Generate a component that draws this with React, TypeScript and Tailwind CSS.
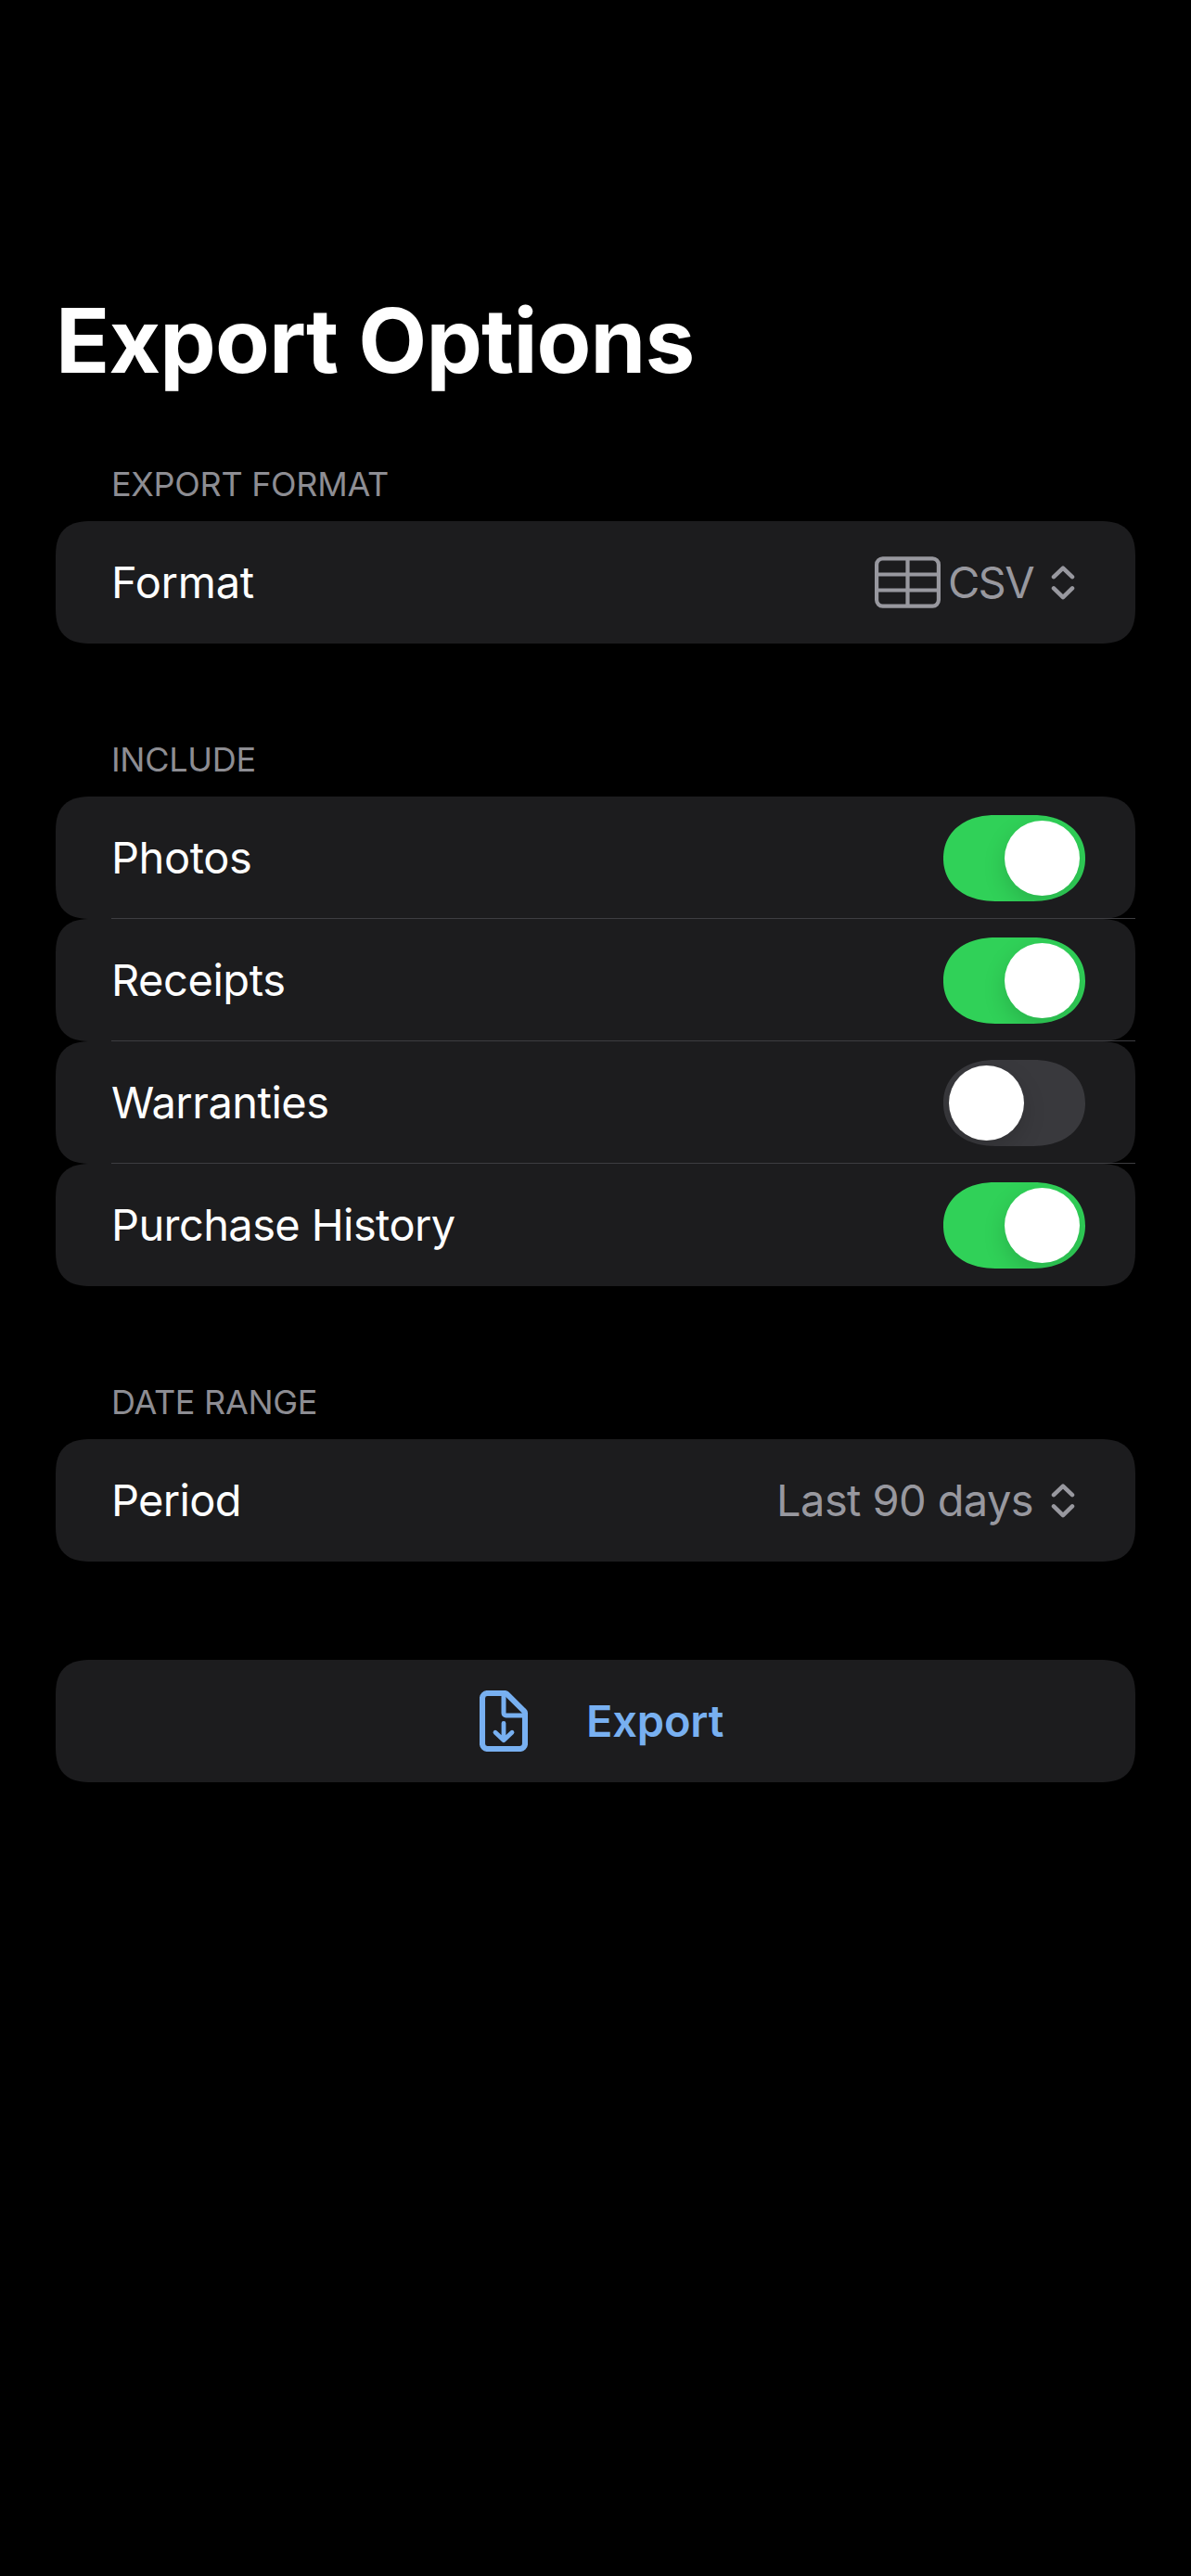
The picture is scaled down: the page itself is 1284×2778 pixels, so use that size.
import React, { useState } from "react";

const CARD =
  "flex h-[132px] items-center rounded-[39px] [corner-shape:superellipse(1.4)] bg-[#1c1c1e] px-[60px] text-[47px] leading-none";

function Chevrons() {
  return (
    <svg width="26" height="37" viewBox="0 0 26 37" fill="none" stroke="currentColor" strokeWidth="4.5" strokeLinecap="round" strokeLinejoin="round" className="ml-[19px] mr-[5px]">
      <path d="M3 12.200 13 2.600 23 12.200" />
      <path d="M3 24.400 13 34.200 23 24.400" />
    </svg>
  );
}

function TableIcon() {
  return (
    <svg width="71" height="56" viewBox="0 0 71 56" fill="none" stroke="currentColor" strokeWidth="4.2" className="mr-[8px]">
      <rect x="2.1" y="2.400" width="66.800" height="51.200" rx="6.500" />
      <path d="M35.500 2v52M2 19.500h67M2 36.500h67" />
    </svg>
  );
}

function ExportIcon() {
  return (
    <svg width="52" height="66" viewBox="0 0 52 66" fill="none" stroke="currentColor" strokeLinecap="round" strokeLinejoin="round">
      <path strokeWidth="6.1" d="M8.500 3H27a4 4 0 0 1 3 1.300L47.600 21.800A4.500 4.500 0 0 1 49 25V57.500a5.500 5.500 0 0 1-5.500 5.500H8.500A5.500 5.500 0 0 1 3 57.500V8.500A5.500 5.500 0 0 1 8.500 3Z" />
      <path strokeWidth="5" d="M26 4v20.500a2.500 2.500 0 0 0 2.500 2.500H48" />
      <path strokeWidth="4.8" d="M26 35.300V53M17 45.200 26 53.700 35 45.200" />
    </svg>
  );
}

function SectionHeader({ children, first = false }: { children: string; first?: boolean }) {
  return (
    <h2 className={`${first ? "mt-[71px]" : "mt-[101px]"} mb-4 pl-[60px] text-[36px] leading-[48px] tracking-[-0.3px] text-[#8d8d93]`}>
      {children}
    </h2>
  );
}

function Toggle({ on, onChange, label }: { on: boolean; onChange: () => void; label: string }) {
  return (
    <button
      role="switch"
      aria-checked={on}
      aria-label={label}
      onClick={onChange}
      className={`flex h-[93px] w-[153px] items-center overflow-hidden rounded-[56px/46.5px] [corner-shape:superellipse(1.12)] p-[6px] ${on ? "justify-end bg-[#30d158]" : "justify-start bg-[#39393d]"}`}
    >
      <span className="size-[81px] rounded-full bg-white shadow-[0_9px_24px_rgba(0,0,0,0.15)]" />
    </button>
  );
}

export default function App() {
  const [rows, setRows] = useState([
    { name: "Photos", on: true, tracking: "tracking-[-0.4px]" },
    { name: "Receipts", on: true, tracking: "tracking-[-0.45px]" },
    { name: "Warranties", on: false, tracking: "tracking-[-0.5px]" },
    { name: "Purchase History", on: true, tracking: "tracking-[-0.6px]" },
  ]);
  const toggle = (i: number) => setRows(rows.map((r, j) => (i === j ? { ...r, on: !r.on } : r)));

  return (
    <main className="min-h-[2778px] bg-black px-[60px] pt-[307px] font-['Inter',sans-serif] text-white">
      <h1 className="text-[96px] font-bold leading-[120px] tracking-[-0.85px]">Export Options</h1>

      <SectionHeader first>EXPORT FORMAT</SectionHeader>
      <div className={`${CARD} justify-between`}>
        <span className="pb-[2px] tracking-[-0.25px]">Format</span>
        <span className="flex items-center text-[#98989f]">
          <TableIcon />
          <span className="pb-[2px] tracking-[-1.6px]">CSV</span>
          <Chevrons />
        </span>
      </div>

      <SectionHeader>INCLUDE</SectionHeader>
      <ul>
        {rows.map((row, i) => (
          <li key={row.name} className="relative">
            <div className={`${CARD} justify-between`}>
              <span className={`pb-[2px] ${row.tracking}`}>{row.name}</span>
              <span className="-mr-[6px]">
                <Toggle on={row.on} onChange={() => toggle(i)} label={row.name} />
              </span>
            </div>
            {i < rows.length - 1 && <span className="absolute bottom-0 left-[60px] right-0 h-px bg-[#3d3d41]" />}
          </li>
        ))}
      </ul>

      <SectionHeader>DATE RANGE</SectionHeader>
      <div className={`${CARD} justify-between`}>
        <span className="pb-[2px] tracking-[-0.7px]">Period</span>
        <span className="flex items-center text-[#98989f]">
          <span className="pb-[2px] tracking-[-0.6px]">Last 90 days</span>
          <Chevrons />
        </span>
      </div>

      <button className={`${CARD} mt-[106px] w-full gap-[63px] pl-[457px] font-semibold text-[#78b0f1]`}>
        <ExportIcon />
        <span className="pb-[2px] tracking-[-0.2px]">Export</span>
      </button>
    </main>
  );
}
